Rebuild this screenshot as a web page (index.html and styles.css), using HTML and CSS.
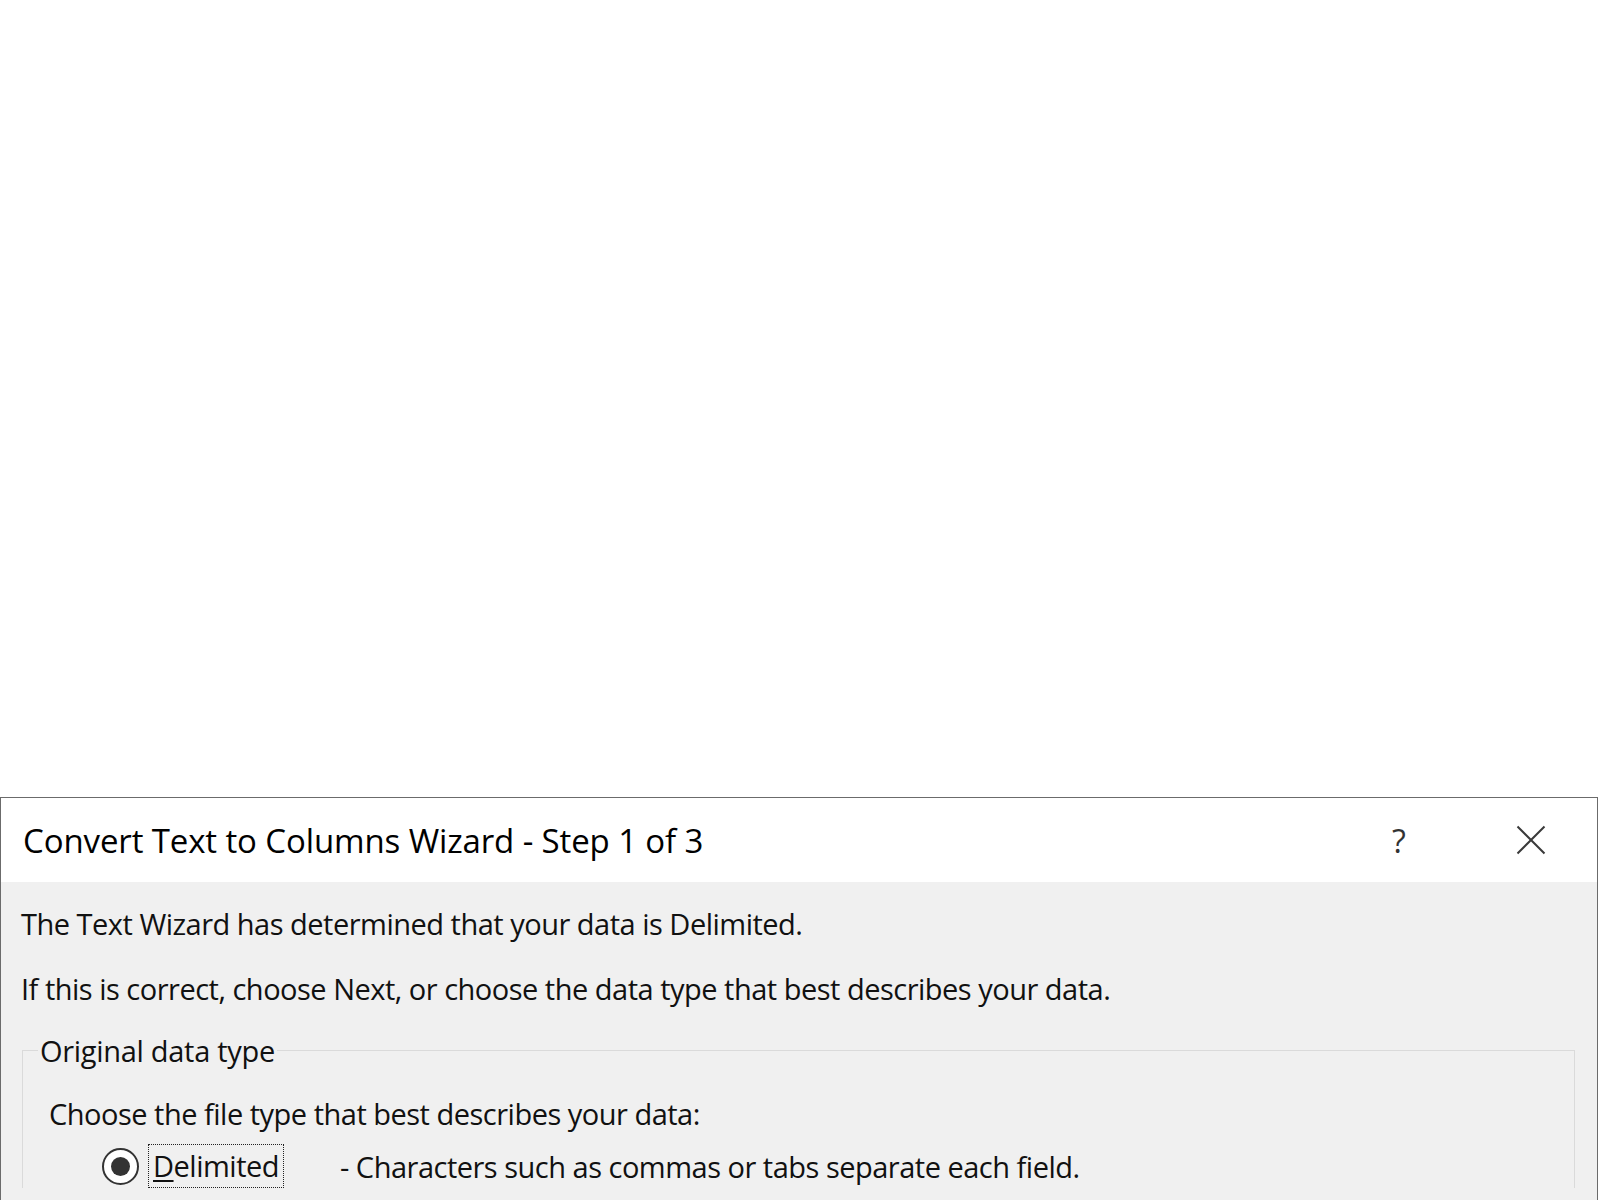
FILE: index.html
```html
<!DOCTYPE html>
<html lang="en">
<head>
<meta charset="utf-8">
<title>Convert Text to Columns Wizard</title>
<link rel="stylesheet" href="styles.css">
</head>
<body>
<div class="desktop">
  <div class="dialog">
    <div class="titlebar">
      <span class="title">Convert Text to Columns Wizard - Step 1 of 3</span>
      <span class="help">?</span>
      <svg class="close" width="30" height="30" viewBox="0 0 30 30" aria-hidden="true">
        <path d="M1.5 1.5 L28.5 28.5 M28.5 1.5 L1.5 28.5" stroke="#3a3a3a" stroke-width="2" fill="none"/>
      </svg>
    </div>
    <div class="content">
      <p class="line">The Text Wizard has determined that your data is Delimited.</p>
      <p class="line">If this is correct, choose Next, or choose the data type that best describes your data.</p>
      <fieldset class="group">
        <legend class="group-title">Original data type</legend>
        <p class="prompt">Choose the file type that best describes your data:</p>
        <div class="option">
          <span class="radio"><span class="radio-dot"></span></span>
          <span class="option-label"><span class="accel">D</span>elimited</span>
          <span class="option-desc">- Characters such as commas or tabs separate each field.</span>
        </div>
      </fieldset>
    </div>
  </div>
</div>
</body>
</html>
```
FILE: styles.css
```css
html, body {
  margin: 0;
  padding: 0;
  background: #ffffff;
}

.desktop {
  height: 1200px;
  padding-top: 797px;
  box-sizing: border-box;
  overflow: hidden;
  font-family: "Open Sans", "Noto Sans", sans-serif;
  color: #111;
}

.dialog {
  width: 1596px;
  border: 1px solid #6b6b6b;
  border-bottom: none;
  background: #f0f0f0;
  height: 420px;
}

.titlebar {
  height: 84px;
  background: #ffffff;
  display: flex;
  align-items: center;
  padding-left: 22px;
}

.title {
  flex: 1;
  font-size: 33px;
  letter-spacing: -0.12px;
  color: #000;
}

.help {
  font-size: 32px;
  color: #333;
  width: 20px;
  margin-right: 104px;
}

.close {
  margin-right: 51px;
  margin-top: 0;
}

.content {
  padding: 9px 0 0 20px;
  font-size: 29px;
  letter-spacing: -0.5px;
}

.line {
  margin: 0;
  line-height: 65px;
}

.group {
  margin: 10px 22px 0 1px;
  padding: 0;
  border: 1px solid #dadada;
  border-bottom: none;
  min-width: 0;
}

.group-title {
  margin-left: 15px;
  padding: 0 2px;
  line-height: normal;
  letter-spacing: -0.3px;
}

.prompt {
  margin: 24px 0 0 26px;
  line-height: 40px;
}

.option {
  display: flex;
  align-items: center;
  margin-top: 10px;
  margin-left: 26px;
  height: 44px;
}

.radio {
  width: 33px;
  height: 33px;
  border: 2px solid #333;
  border-radius: 50%;
  background: #fff;
  display: flex;
  align-items: center;
  justify-content: center;
  margin-left: 53px;
}

.radio-dot {
  width: 19px;
  height: 19px;
  border-radius: 50%;
  background: #333;
}

.option-label {
  margin-left: 9px;
  border: 1px dotted #222;
  padding: 0 6px 0 4px;
  line-height: 42px;
  width: 124px;
}

.accel {
  text-decoration: underline;
  text-underline-offset: 3px;
}

.option-desc {
  margin-left: 56px;
}
```
